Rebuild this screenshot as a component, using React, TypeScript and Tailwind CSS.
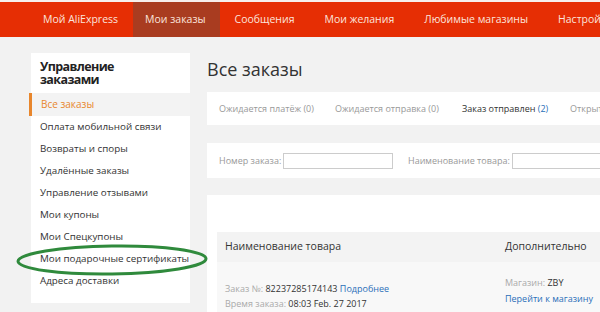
const NAV = ['Мой AliExpress', 'Мои заказы', 'Сообщения', 'Мои желания', 'Любимые магазины', 'Настройки'];

const MENU = [
  'Все заказы',
  'Оплата мобильной связи',
  'Возвраты и споры',
  'Удалённые заказы',
  'Управление отзывами',
  'Мои купоны',
  'Мои Спецкупоны',
  'Мои подарочные сертификаты',
  'Адреса доставки',
];

export default function App() {
  return (
    <div className="relative w-[600px] h-[312px] overflow-hidden bg-[#f2f2f2] font-['Open_Sans',sans-serif]">
      {/* top strip */}
      <div className="h-[2px] bg-[#f7efec]" />

      {/* nav */}
      <nav className="flex h-[35px] bg-[#e62e04] pl-[28px] whitespace-nowrap">
        {NAV.map((item, i) => (
          <div
            key={item}
            className={
              i === 1
                ? 'flex items-center pl-[12px] pr-[14px] text-[10.5px] text-[#fbe4dc] bg-[#a93c20]'
                : 'flex items-center px-[15px] text-[10.5px] text-[#fbe4dc]'
            }
          >
            {item}
          </div>
        ))}
      </nav>

      <div className="flex pl-[31px] pt-[16px]">
        {/* sidebar */}
        <aside className="w-[159px] h-[250px] shrink-0 bg-white">
          <div className="h-[40px] pt-[7px] pl-[9px] text-[12.5px] font-bold leading-[13px] tracking-[-0.6px] text-[#222]">
            Управление
            <br />
            заказами
          </div>
          {MENU.map((item, i) =>
            i === 0 ? (
              <div
                key={item}
                className="flex items-center h-[23px] -ml-[2px] pl-[9px] border-l-[3px] border-[#e8862c] bg-[#f3f3f3] text-[10px] text-[#e8862c]"
              >
                {item}
              </div>
            ) : (
              <div key={item} className="flex items-center h-[22px] pl-[9px] text-[9.8px] text-[#333] whitespace-nowrap">
                {item}
              </div>
            )
          )}
        </aside>

        {/* main */}
        <main className="ml-[17px] w-[420px] shrink-0">
          <h1 className="h-[39px] pt-[3px] text-[18px] leading-[26px] text-[#333] whitespace-nowrap">Все заказы</h1>

          <div className="flex items-center h-[33px] pl-[12px] bg-white text-[9px] whitespace-nowrap">
            <span className="w-[116px] shrink-0 text-[#999]">Ожидается платёж (0)</span>
            <span className="w-[127px] shrink-0 text-[#999]">Ожидается отправка (0)</span>
            <span className="w-[108px] shrink-0 text-[#333]">
              Заказ отправлен <span className="text-[#2a6fb8]">(2)</span>
            </span>
            <span className="shrink-0 text-[#999]">Открытые споры</span>
          </div>

          <div className="flex items-center h-[35px] mt-[18px] pl-[12px] bg-white text-[9px] text-[#999] whitespace-nowrap">
            <span className="w-[64px] shrink-0">Номер заказа:</span>
            <div className="w-[110px] h-[16px] shrink-0 border border-[#ccc] bg-white" />
            <span className="ml-[15px] w-[104px] shrink-0">Наименование товара:</span>
            <div className="w-[120px] h-[16px] shrink-0 border border-[#ccc] bg-white" />
          </div>

          <div className="mt-[17px] h-[140px] bg-white pl-[10px] pt-[37px]">
            <div className="flex items-center h-[30px] pl-[8px] bg-[#f3f3f3] text-[10.5px] text-[#333] whitespace-nowrap">
              <span className="w-[280px] shrink-0">Наименование товара</span>
              <span>Дополнительно</span>
            </div>
            <div className="flex h-[60px] pl-[8px] pt-[13px] bg-[#f8f8f8] text-[9px] leading-[15px] whitespace-nowrap">
              <div className="w-[280px] shrink-0 pt-[6px]">
                <div>
                  <span className="text-[#aaa]">Заказ №: </span>
                  <span className="text-[#333]">82237285174143 </span>
                  <span className="text-[#2a6fb8]">Подробнее</span>
                </div>
                <div>
                  <span className="text-[#aaa]">Время заказа: </span>
                  <span className="text-[#333]">08:03 Feb. 27 2017</span>
                </div>
              </div>
              <div>
                <div>
                  <span className="text-[#aaa]">Магазин: </span>
                  <span className="text-[#333]">ZBY</span>
                </div>
                <div className="mt-[1px] text-[#2a6fb8]">Перейти к магазину</div>
              </div>
            </div>
          </div>
        </main>
      </div>

      {/* hand-drawn highlight */}
      <svg className="absolute left-[14px] top-[242px]" width="196" height="36" viewBox="0 0 196 36">
        <ellipse cx="98" cy="18" rx="94" ry="14" fill="none" stroke="#2f8a3c" strokeWidth="3" transform="rotate(-0.8 98 18)" />
      </svg>
    </div>
  );
}
